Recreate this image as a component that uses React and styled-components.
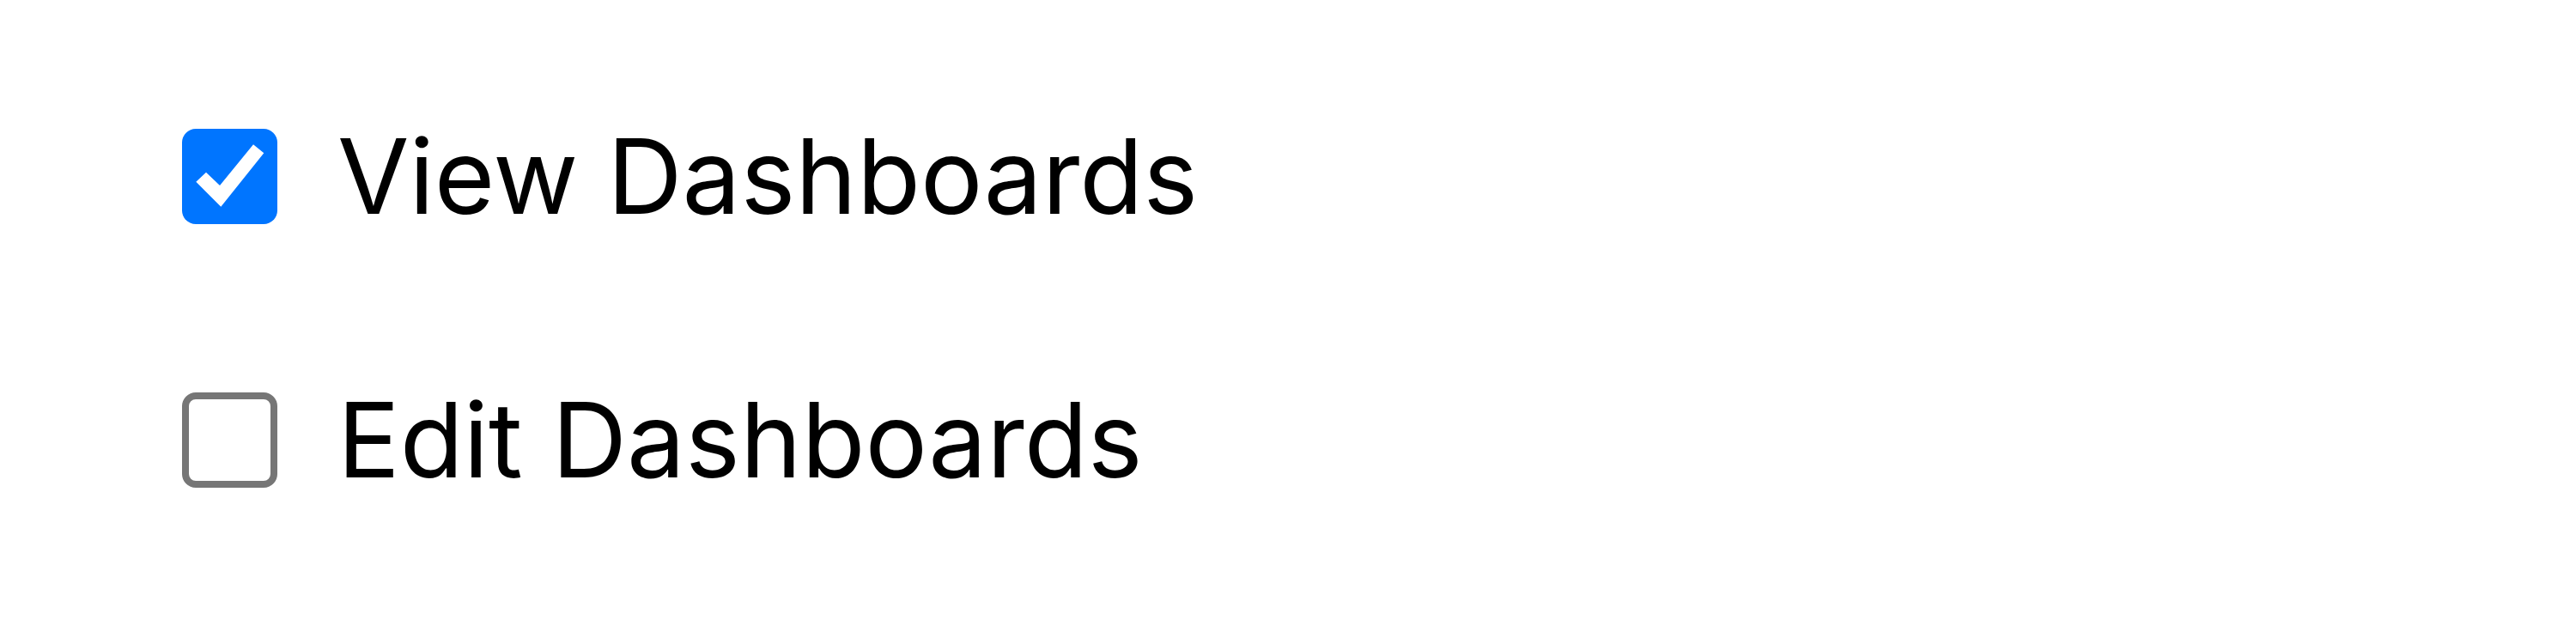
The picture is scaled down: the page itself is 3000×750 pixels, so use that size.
import React, { useState } from "react";
import styled, { createGlobalStyle } from "styled-components";

const GlobalStyle = createGlobalStyle`
  html, body {
    margin: 0;
    padding: 0;
    background: #ffffff;
  }
  body {
    font-family: Inter, "Noto Sans", "Liberation Sans", sans-serif;
  }
`;

const List = styled.div`
  display: flex;
  flex-direction: column;
  gap: 196px;
  padding: 150px 0 0 212px;
`;

const Row = styled.label`
  display: flex;
  align-items: center;
  gap: 70px;
  height: 111px;
  cursor: pointer;
  user-select: none;
`;

const HiddenInput = styled.input`
  position: absolute;
  opacity: 0;
  width: 0;
  height: 0;
  margin: 0;
`;

const Box = styled.span`
  box-sizing: border-box;
  flex: none;
  width: 111px;
  height: 111px;
  border-radius: 16px;
  display: flex;
  align-items: center;
  justify-content: center;
  background: ${(p) => (p.$checked ? "#0075ff" : "#ffffff")};
  border: ${(p) => (p.$checked ? "none" : "8px solid #767676")};
`;

const Label = styled.span`
  font-family: Inter, "Noto Sans", "Liberation Sans", sans-serif;
  font-size: 121px;
  line-height: 111px;
  color: #000000;
  white-space: nowrap;
`;

function CheckMark() {
  return (
    <svg width="111" height="111" viewBox="0 0 111 111" aria-hidden="true">
      <polygon
        points="16.3,61.7 28,50.7 44,66 83,18.3 95.3,28.3 45.3,90.7"
        fill="#ffffff"
      />
    </svg>
  );
}

function Checkbox({ label, defaultChecked }) {
  const [checked, setChecked] = useState(defaultChecked);
  return (
    <Row>
      <HiddenInput
        type="checkbox"
        checked={checked}
        onChange={(e) => setChecked(e.target.checked)}
      />
      <Box $checked={checked}>{checked && <CheckMark />}</Box>
      <Label>{label}</Label>
    </Row>
  );
}

export default function App() {
  return (
    <>
      <GlobalStyle />
      <List>
        <Checkbox label="View Dashboards" defaultChecked />
        <Checkbox label="Edit Dashboards" defaultChecked={false} />
      </List>
    </>
  );
}
